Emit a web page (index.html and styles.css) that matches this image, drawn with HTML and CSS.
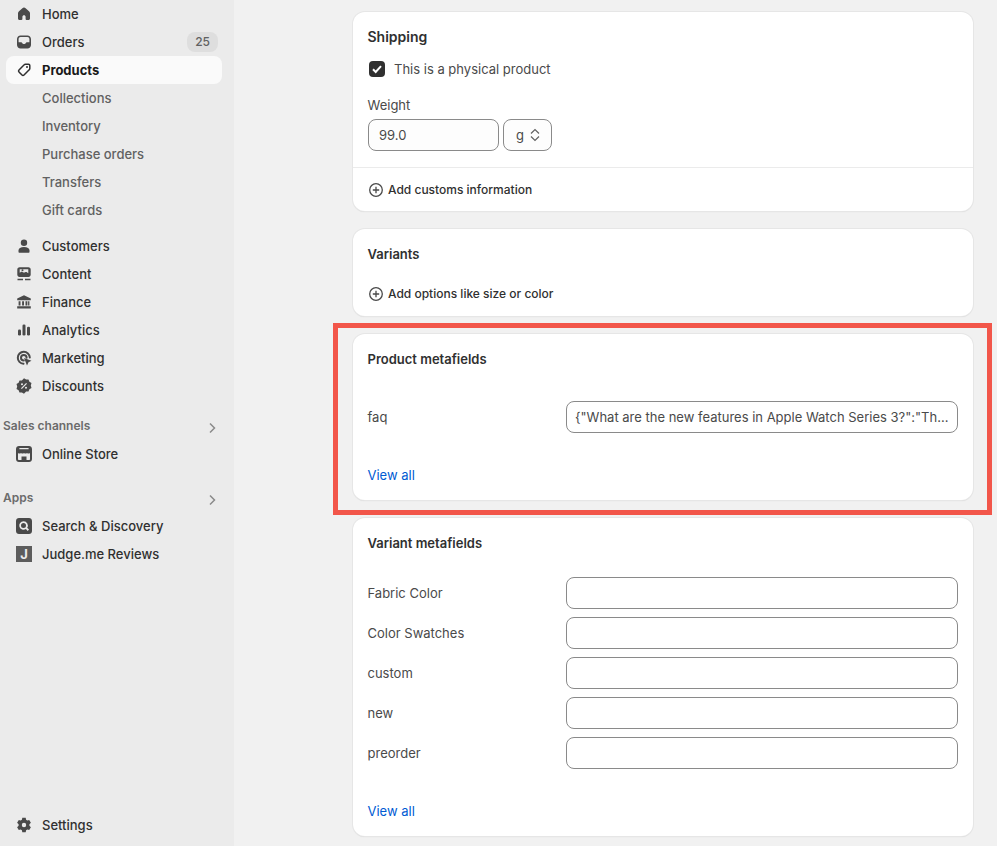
FILE: index.html
```html
<!DOCTYPE html>
<html lang="en">
<head>
    <meta charset="UTF-8">
    <title>Products</title>
    <link rel="stylesheet" href="styles.css">
</head>
<body>
    <nav class="sidebar">
        <a class="nav-item">
            <svg class="nav-icon" viewBox="0 0 16 16"><path d="M8 1.600c-.6 0-1.100.2-1.600.6L3 5.200C2.300 5.800 2 6.500 2 7.300v5.200C2 13.400 2.700 14 3.500 14H5.500c.5 0 .9-.4.9-.9v-2.300c0-.9.7-1.600 1.600-1.600s1.600.7 1.600 1.600v2.300c0 .5.4.9.9.9h2c.8 0 1.500-.6 1.500-1.500V7.300c0-.8-.3-1.500-1-2.100L9.600 2.200C9.100 1.800 8.600 1.600 8 1.600z"/></svg>
            <span>Home</span>
        </a>
        <a class="nav-item">
            <svg class="nav-icon" viewBox="0 0 16 16"><path fill-rule="evenodd" d="M4.500 1.500h7C13.400 1.500 15 3.100 15 5v6c0 1.900-1.600 3.500-3.500 3.500h-7C2.600 14.500 1 12.900 1 11V5c0-1.900 1.600-3.500 3.500-3.500zm0 1.600c-1 0-1.900.9-1.900 1.900v3.300h2.600c.5 0 .8.300 1 .7.300.7 1 1.100 1.800 1.100s1.500-.4 1.800-1.100c.2-.4.500-.7 1-.7h2.600V5c0-1-.9-1.900-1.900-1.900z"/></svg>
            <span>Orders</span>
            <span class="badge">25</span>
        </a>
        <a class="nav-item active">
            <svg class="nav-icon" viewBox="0 0 16 16"><path fill="none" stroke="#303030" stroke-width="1.500" stroke-linejoin="round" d="M9.500 2.200h3c.7 0 1.300.6 1.300 1.300v3c0 .5-.2 1-.6 1.300l-5.200 5.200c-.6.6-1.400.6-2 0l-3-3c-.6-.6-.6-1.400 0-2l5.200-5.200c.3-.4.800-.6 1.300-.6z"/><circle cx="11" cy="5" r="1" fill="#303030"/></svg>
            <span>Products</span>
        </a>
        <a class="nav-item sub">Collections</a>
        <a class="nav-item sub">Inventory</a>
        <a class="nav-item sub">Purchase orders</a>
        <a class="nav-item sub">Transfers</a>
        <a class="nav-item sub">Gift cards</a>

        <a class="nav-item group-start">
            <svg class="nav-icon" viewBox="0 0 16 16"><circle cx="8" cy="4.700" r="3.200"/><path d="M2.500 12.500C2.500 10.300 4.500 9 8 9s5.500 1.300 5.500 3.500V14c0 .4-.3.700-.7.700H3.200c-.4 0-.7-.3-.7-.7z"/></svg>
            <span>Customers</span>
        </a>
        <a class="nav-item">
            <svg class="nav-icon" viewBox="0 0 16 16"><path fill-rule="evenodd" d="M3.500 1.200h9c1.200 0 2.200 1 2.200 2.200v5.400c0 1.200-1 2.200-2.200 2.200h-9c-1.200 0-2.200-1-2.200-2.200V3.400c0-1.200 1-2.200 2.200-2.200zm.2 2v3.600c.5-.4 1.100-1.100 2-1.100 1 0 1.600.8 2.300.8.900 0 1.300-.5 2-.5.800 0 1.400.7 2.300 1.300V3.200zM1.500 12.800h5.500v1.400H1.500zm7.500 0h5.500v1.400H9z"/><circle cx="6.500" cy="4.200" r="1"/></svg>
            <span>Content</span>
        </a>
        <a class="nav-item">
            <svg class="nav-icon" viewBox="0 0 16 16"><path d="M8 1.200l6.800 3.400v1.600H1.200V4.600zM2.600 7.200h1.900v4.300H2.600zm3.500 0H8v4.300H6.100zm3.400 0h1.900v4.300H9.500zm2.600 0h1.300v4.300h-1.300zM1.200 12.300h13.600v2.200H1.200z"/></svg>
            <span>Finance</span>
        </a>
        <a class="nav-item">
            <svg class="nav-icon" viewBox="0 0 16 16"><rect x="2" y="7.500" width="3" height="6" rx="1.300"/><rect x="6.500" y="2.500" width="3" height="11" rx="1.300"/><rect x="11" y="4.800" width="3" height="8.700" rx="1.300"/></svg>
            <span>Analytics</span>
        </a>
        <a class="nav-item">
            <svg class="nav-icon" viewBox="0 0 16 16"><path fill="none" stroke="#4a4a4a" stroke-width="2" stroke-linecap="round" d="M13.800 7.500A6 6 0 1 0 7.500 13.800M10.600 7.800a2.800 2.800 0 1 0-2.800 2.800"/><path d="M8 8l7.500 2.700-3 1.500-1.500 3.300z"/></svg>
            <span>Marketing</span>
        </a>
        <a class="nav-item">
            <svg class="nav-icon" viewBox="0 0 16 16"><path fill-rule="evenodd" d="M8 .2l2.100 1.300 2.400-.1.900 2.300 2.100 1.300-.7 2.500.7 2.500-2.100 1.300-.9 2.300-2.400-.1L8 15.800l-2.100-1.300-2.400.1-.9-2.300L.5 11l.7-2.500-.7-2.500 2.100-1.300.9-2.300 2.400.1zM6 5.300a1 1 0 1 0 0 2 1 1 0 0 0 0-2zm4 3.400a1 1 0 1 0 0 2 1 1 0 0 0 0-2zM10.100 5L5 10.200l.8.800L11 5.800z"/></svg>
            <span>Discounts</span>
        </a>

        <div class="nav-heading">
            <span>Sales channels</span>
            <svg class="chevron" viewBox="0 0 16 16"><path d="M6 3.500L10.500 8 6 12.500"/></svg>
        </div>
        <a class="nav-item">
            <svg class="nav-icon" viewBox="0 0 16 16"><path fill-rule="evenodd" d="M3 0h10c1.700 0 3 1.300 3 3v10c0 1.700-1.300 3-3 3H3c-1.700 0-3-1.300-3-3V3c0-1.700 1.300-3 3-3zm.4 2v1.300h9.200V2zM2 7v6.300c0 .4.300.7.700.7h2.800v-3.500h5V14h2.800c.4 0 .7-.3.700-.7V7c-.8.800-2.200.8-3 0-.8.800-2.200.8-3 0-.8.800-2.200.8-3 0-.8.800-2.200.8-3 0z"/></svg>
            <span>Online Store</span>
        </a>

        <div class="nav-heading apps">
            <span>Apps</span>
            <svg class="chevron" viewBox="0 0 16 16"><path d="M6 3.500L10.500 8 6 12.500"/></svg>
        </div>
        <a class="nav-item">
            <svg class="nav-icon" viewBox="0 0 16 16"><path fill-rule="evenodd" d="M3 0h10c1.700 0 3 1.300 3 3v10c0 1.700-1.300 3-3 3H3c-1.700 0-3-1.300-3-3V3c0-1.700 1.300-3 3-3zm4.500 3.200a4.300 4.300 0 1 0 2.400 7.900l1.800 1.800 1.300-1.300-1.800-1.800a4.300 4.300 0 0 0-3.700-6.600zm0 1.800a2.500 2.500 0 1 1 0 5 2.500 2.500 0 0 1 0-5z"/></svg>
            <span>Search &amp; Discovery</span>
        </a>
        <a class="nav-item">
            <span class="judge-icon">J</span>
            <span>Judge.me Reviews</span>
        </a>

        <a class="nav-item settings">
            <svg class="nav-icon" viewBox="0 0 16 16"><path fill-rule="evenodd" d="M6.300.8h3.400l.4 2 1.200.7 1.900-.6 1.700 2.900-1.500 1.400v1.600l1.500 1.400-1.700 2.900-1.900-.6-1.200.7-.4 2H6.300l-.4-2-1.200-.7-1.900.6-1.700-2.900 1.500-1.400V7.200L1.100 5.800l1.700-2.900 1.900.6 1.200-.7zM8 5.800a2.200 2.200 0 1 0 0 4.400 2.200 2.200 0 0 0 0-4.400z"/></svg>
            <span>Settings</span>
        </a>
    </nav>

    <main class="content">
        <section class="card">
            <div class="card-body shipping">
                <h2>Shipping</h2>
                <label class="checkbox-row">
                    <span class="checkbox">
                        <svg viewBox="0 0 16 16"><path d="M4 8.300l2.700 2.700L12 5.200"/></svg>
                    </span>
                    This is a physical product
                </label>
                <div class="weight-label">Weight</div>
                <div class="weight-row">
                    <div class="input weight-input">99.0</div>
                    <div class="input unit-select">
                        g
                        <svg viewBox="0 0 12 16"><path d="M2 6.500l4-4 4 4M2 9.500l4 4 4-4"/></svg>
                    </div>
                </div>
            </div>
            <div class="card-footer">
                <a class="add-link">
                    <svg viewBox="0 0 16 16"><circle cx="8" cy="8" r="6.300"/><path d="M8 4.800v6.400M4.800 8h6.400"/></svg>
                    Add customs information
                </a>
            </div>
        </section>

        <section class="card">
            <div class="card-body variants">
                <h2>Variants</h2>
                <a class="add-link">
                    <svg viewBox="0 0 16 16"><circle cx="8" cy="8" r="6.300"/><path d="M8 4.800v6.400M4.800 8h6.400"/></svg>
                    Add options like size or color
                </a>
            </div>
        </section>

        <section class="card">
            <div class="card-body metafields">
                <h2>Product metafields</h2>
                <div class="field-list product-fields">
                    <div class="field-row">
                        <span class="field-label">faq</span>
                        <div class="input field-input">{"What are the new features in Apple Watch Series 3?":"Th...</div>
                    </div>
                </div>
                <a class="view-all">View all</a>
            </div>
        </section>

        <section class="card">
            <div class="card-body metafields">
                <h2>Variant metafields</h2>
                <div class="field-list">
                    <div class="field-row">
                        <span class="field-label">Fabric Color</span>
                        <div class="input field-input"></div>
                    </div>
                    <div class="field-row">
                        <span class="field-label">Color Swatches</span>
                        <div class="input field-input"></div>
                    </div>
                    <div class="field-row">
                        <span class="field-label">custom</span>
                        <div class="input field-input"></div>
                    </div>
                    <div class="field-row">
                        <span class="field-label">new</span>
                        <div class="input field-input"></div>
                    </div>
                    <div class="field-row">
                        <span class="field-label">preorder</span>
                        <div class="input field-input"></div>
                    </div>
                </div>
                <a class="view-all">View all</a>
            </div>
        </section>
    </main>

    <div class="highlight"></div>
</body>
</html>
```

FILE: styles.css
```css
* {
    box-sizing: border-box;
}
html, body {
    height: 100%;
}
body {
    margin: 0;
    display: flex;
    height: 846px;
    overflow: hidden;
    position: relative;
    background-color: #f1f1f1;
    color: #303030;
    font-family: Inter, "Liberation Sans", sans-serif;
    font-size: 13px;
    line-height: 20px;
}

/* sidebar */
.sidebar {
    width: 234px;
    flex-shrink: 0;
    display: flex;
    flex-direction: column;
    background-color: #ebebeb;
    padding: 0 12px 7px 6px;
}
.nav-item {
    display: flex;
    align-items: center;
    height: 28px;
    flex-shrink: 0;
    padding-left: 10px;
    gap: 10px;
    border-radius: 8px;
    font-weight: 500;
    color: #303030;
}
.nav-item.active {
    background-color: #fafafa;
    font-weight: 650;
    color: #1a1a1a;
}
.nav-item.sub {
    padding-left: 36px;
    color: #616161;
}
.nav-item.group-start {
    margin-top: 8px;
}
.nav-item.settings {
    margin-top: auto;
}
.nav-icon {
    width: 16px;
    height: 16px;
    flex-shrink: 0;
    fill: #4a4a4a;
}
.badge {
    margin-left: auto;
    margin-right: 4px;
    padding: 0 8px;
    height: 20px;
    border-radius: 8px;
    background-color: #dedede;
    color: #616161;
    font-size: 12px;
}
.nav-heading {
    display: flex;
    align-items: center;
    justify-content: space-between;
    height: 28px;
    margin: 12px 0 0 -3px;
    padding-right: 2px;
    font-size: 12px;
    font-weight: 600;
    color: #6b6b6b;
}
.nav-heading.apps {
    margin-top: 16px;
}
.chevron {
    width: 16px;
    height: 16px;
    margin-top: 3px;
    fill: none;
    stroke: #8a8a8a;
    stroke-width: 1.500;
}
.judge-icon {
    width: 16px;
    height: 16px;
    flex-shrink: 0;
    background-color: #5c5c5c;
    color: #ebebeb;
    font-size: 13px;
    font-weight: 700;
    line-height: 16px;
    text-align: center;
}

/* main column */
.content {
    flex: 1;
    min-width: 0;
    display: flex;
    flex-direction: column;
    gap: 18px;
    padding: 12px 24px 0 119px;
}
.card {
    flex-shrink: 0;
    background-color: #ffffff;
    border-radius: 12px;
    box-shadow: 0 0 0 1px #e6e6e6, 0 1px 1px 0 #cfcfcf;
}
.card h2 {
    margin: 0;
    font-size: 13px;
    font-weight: 600;
    line-height: 20px;
    color: #303030;
}
.card-body {
    padding: 15px 15px 0 14.500px;
}
.shipping {
    height: 156px;
    border-bottom: 1px solid #ebebeb;
}
.shipping h2 {
    font-size: 14px;
}
.checkbox-row {
    display: flex;
    align-items: center;
    gap: 9px;
    margin: 12px 0 0 1.500px;
    color: #4a4a4a;
}
.checkbox {
    width: 16px;
    height: 16px;
    border-radius: 4px;
    background-color: #303030;
}
.checkbox svg {
    display: block;
    fill: none;
    stroke: #ffffff;
    stroke-width: 2;
}
.weight-label {
    margin-top: 16px;
    color: #4a4a4a;
}
.weight-row {
    display: flex;
    gap: 4px;
    margin: 4px 0 0 .5px;
}
.input {
    height: 32px;
    border: 1px solid #8a8a8a;
    border-radius: 8px;
    background-color: #fdfdfd;
    color: #4a4a4a;
    line-height: 30px;
}
.weight-input {
    width: 131px;
    padding-left: 10px;
}
.unit-select {
    width: 49px;
    display: flex;
    align-items: center;
    gap: 5px;
    padding-left: 12px;
}
.unit-select svg {
    width: 12px;
    height: 16px;
    fill: none;
    stroke: #616161;
    stroke-width: 1.200;
}
.card-footer {
    height: 43px;
    padding: 12px 15px 0;
}
.add-link {
    display: flex;
    align-items: center;
    gap: 4px;
    font-size: 12px;
    font-weight: 550;
    color: #303030;
}
.add-link svg {
    width: 16px;
    height: 16px;
    fill: none;
    stroke: #4a4a4a;
    stroke-width: 1.300;
}
.variants {
    height: 87px;
}
.variants .add-link {
    margin: 20px 0 0 .5px;
}
.metafields {
    padding-bottom: 15px;
}
.field-list {
    display: flex;
    flex-direction: column;
    gap: 8px;
    margin-top: 24px;
}
.field-list.product-fields {
    margin-top: 32px;
}
.field-row {
    display: flex;
    align-items: center;
}
.field-label {
    width: 198.500px;
    flex-shrink: 0;
    color: #4a4a4a;
}
.field-input {
    flex: 1;
    min-width: 0;
    padding: 0 8px;
    background-color: #ffffff;
    white-space: nowrap;
}
.view-all {
    display: block;
    margin-top: 32px;
    color: #005bd3;
}

/* red annotation frame over the screenshot */
.highlight {
    position: absolute;
    left: 333px;
    top: 323px;
    width: 659px;
    height: 192px;
    border: 5px solid #f2564a;
}
```
